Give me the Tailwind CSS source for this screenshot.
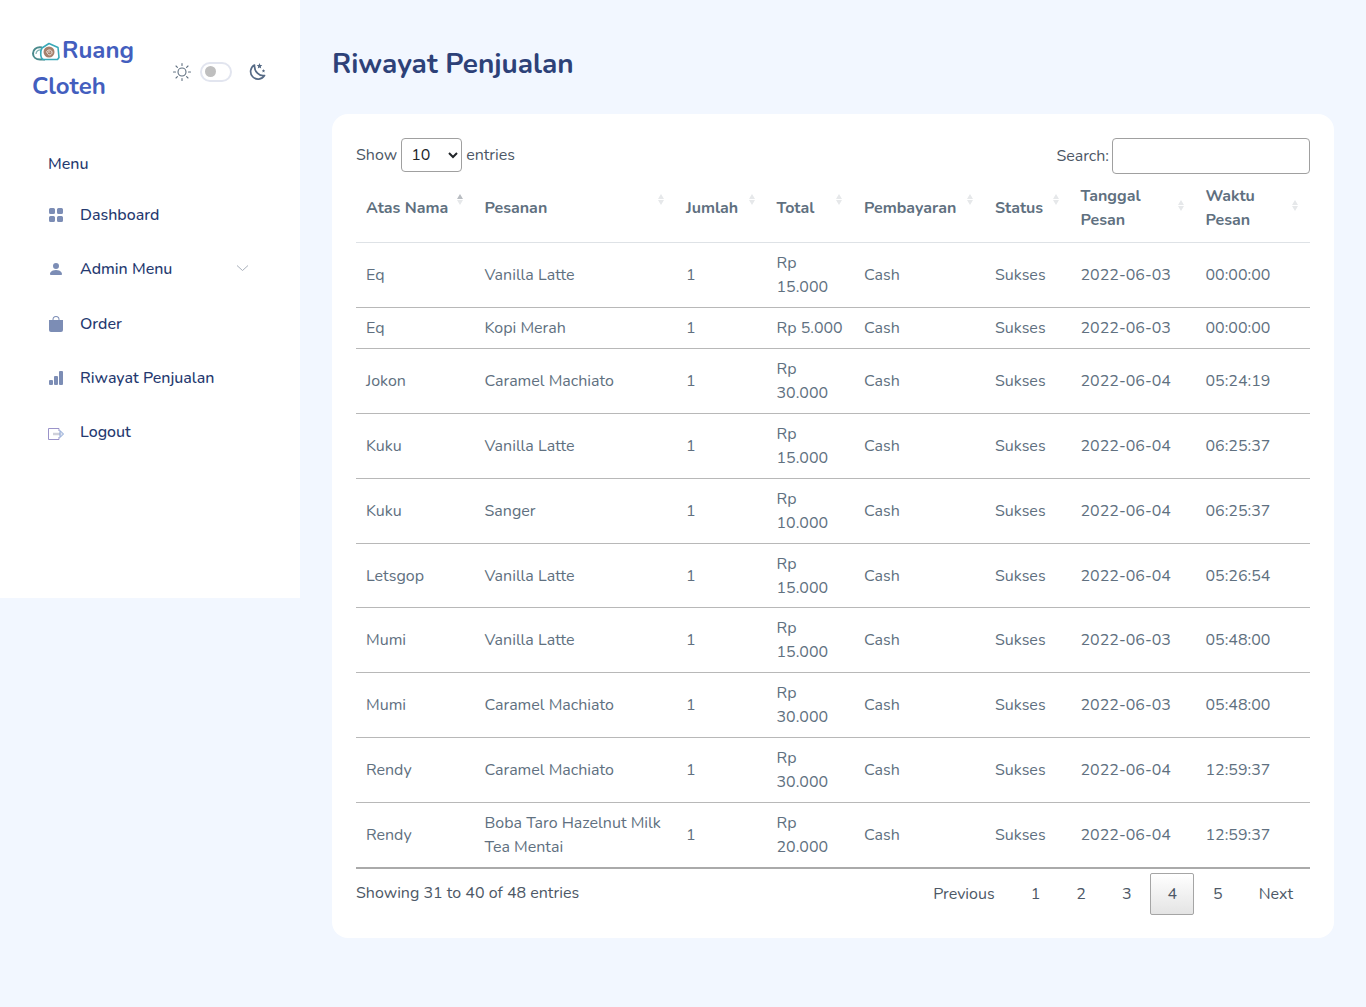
<!DOCTYPE html>
<html lang="id">
<head>
    <meta charset="UTF-8">
    <meta name="viewport" content="width=device-width, initial-scale=1.0">
    <title>Riwayat Penjualan</title>
    <script src="https://cdn.jsdelivr.net/npm/@tailwindcss/browser@4"></script>
</head>
<body class="bg-[#f2f7ff] text-[#607080] font-['Nunito','Lato',sans-serif] text-base leading-6 min-h-[1007px]">
<div class="flex items-start">
    <!-- Sidebar -->
    <aside class="w-[300px] h-[598px] shrink-0 bg-white">
        <div class="flex items-center pt-[32px] pl-[32px]">
            <div class="w-[120px] text-[24px] leading-[36px] font-bold text-[#435ebe]">
                <svg class="inline-block w-[30px] h-[20px] align-[-4px]" viewBox="0 0 30 20" fill="none">
                    <path d="M10 5.500C4 4.500 1 8 1 11.500 1 15 4 17.500 8 17.500h5" stroke="#4a8a8c" stroke-width="2"/>
                    <path d="M4 12c0-3 2.500-4.500 5.500-4" stroke="#7fb0b0" stroke-width="1.200"/>
                    <path d="M10 6L17 1.500 26 5.500l1 10-1.500 2H12C8 17.500 8 9 10 6z" fill="#fff" stroke="#39a9b8" stroke-width="1.600" stroke-linejoin="round"/>
                    <circle cx="17" cy="10" r="5.500" fill="#a5806c"/>
                    <path d="M14.500 10.500c0-3 5-3.500 5.500-.5s-3.500 4-4.500 1.500c-.4-1.500 2-2.500 2.500-1" stroke="#efe6df" stroke-width="1"/>
                </svg>Ruang Cloteh
            </div>
            <div class="flex items-center ml-[20px] mt-[7px]">
                <svg class="w-5 h-5 text-[#607080]" viewBox="0 0 20 20" fill="none" stroke="currentColor" stroke-width="1.100" stroke-linecap="round">
                    <circle cx="10" cy="10" r="4"/>
                    <path d="M10 1.500v2M10 16.500v2M1.500 10h2M16.500 10h2M4 4l1.400 1.400M14.600 14.600L16 16M4 16l1.400-1.400M14.600 5.400L16 4"/>
                </svg>
                <span class="ml-[8px] flex items-center w-[32px] h-[20px] rounded-full border-[2px] border-[#e2e5ef] bg-white pl-[3px]">
                    <span class="w-[11px] h-[11px] rounded-full bg-[#bfbfbf]"></span>
                </span>
                <svg class="ml-[15px] w-5 h-5 text-[#566a85]" viewBox="0 0 20 20" fill="none">
                    <path d="M7.500 3a7.500 7.500 0 1 0 10 10.500c-5 1-10.500-4-10-10.500z" stroke="currentColor" stroke-width="1.700" stroke-linejoin="round"/>
                    <path d="M12.500 1l.8 1.900 2 .2-1.500 1.300.4 2-1.700-1-1.700 1 .4-2-1.500-1.300 2-.2zM16.500 7l.5 1.200 1.200.2-.9.8.2 1.200-1-.6-1 .6.2-1.200-.9-.8 1.200-.2z" fill="currentColor"/>
                </svg>
            </div>
        </div>
        <nav class="mt-[48px] pl-[48px] text-[#25396f] font-medium">
            <div class="leading-[24px]">Menu</div>
            <ul class="mt-[15px] flex flex-col gap-[6.250px]">
                <li class="flex items-center h-[48px]">
                    <svg class="w-4 h-4 fill-[#7c8db5]" viewBox="0 0 16 16"><path d="M1 2.500A1.500 1.500 0 0 1 2.500 1h3A1.500 1.500 0 0 1 7 2.500v3A1.500 1.500 0 0 1 5.500 7h-3A1.500 1.500 0 0 1 1 5.500v-3zm8 0A1.500 1.500 0 0 1 10.500 1h3A1.500 1.500 0 0 1 15 2.500v3A1.500 1.500 0 0 1 13.500 7h-3A1.500 1.500 0 0 1 9 5.500v-3zm-8 8A1.500 1.500 0 0 1 2.500 9h3A1.500 1.500 0 0 1 7 10.500v3A1.500 1.500 0 0 1 5.500 15h-3A1.500 1.500 0 0 1 1 13.500v-3zm8 0A1.500 1.500 0 0 1 10.500 9h3a1.500 1.500 0 0 1 1.500 1.500v3a1.500 1.500 0 0 1-1.500 1.500h-3A1.500 1.500 0 0 1 9 13.500v-3z"/></svg>
                    <span class="ml-[16px]">Dashboard</span>
                </li>
                <li class="flex items-center h-[48px]">
                    <svg class="w-4 h-4 fill-[#7c8db5]" viewBox="0 0 16 16"><path d="M3 14s-1 0-1-1 1-4 6-4 6 3 6 4-1 1-1 1H3zm5-6a3 3 0 1 0 0-6 3 3 0 0 0 0 6z"/></svg>
                    <span class="ml-[16px]">Admin Menu</span>
                    <svg class="ml-[64px] mt-[-3px] w-[13px] h-[8px]" viewBox="0 0 13 8" fill="none" stroke="#a9b0bb" stroke-width="1"><path d="M1 1.500l5.500 5 5.500-5"/></svg>
                </li>
                <li class="flex items-center h-[48px]">
                    <svg class="w-4 h-4 fill-[#7c8db5]" viewBox="0 0 16 16"><path d="M8 1a2.500 2.500 0 0 1 2.500 2.500V4h-5v-.5A2.500 2.500 0 0 1 8 1zm3.500 3v-.5a3.500 3.500 0 1 0-7 0V4H1v10a2 2 0 0 0 2 2h10a2 2 0 0 0 2-2V4h-3.500z"/></svg>
                    <span class="ml-[16px]">Order</span>
                </li>
                <li class="flex items-center h-[48px]">
                    <svg class="w-4 h-4 fill-[#7c8db5]" viewBox="0 0 16 16"><path d="M1 11a1 1 0 0 1 1-1h2a1 1 0 0 1 1 1v3a1 1 0 0 1-1 1H2a1 1 0 0 1-1-1v-3zm5-4a1 1 0 0 1 1-1h2a1 1 0 0 1 1 1v7a1 1 0 0 1-1 1H7a1 1 0 0 1-1-1V7zm5-5a1 1 0 0 1 1-1h2a1 1 0 0 1 1 1v12a1 1 0 0 1-1 1h-2a1 1 0 0 1-1-1V2z"/></svg>
                    <span class="ml-[16px]">Riwayat Penjualan</span>
                </li>
                <li class="flex items-center h-[48px]">
                    <svg class="w-4 h-4 mt-[3px]" viewBox="0 0 16 16" fill="none">
                        <path d="M5 8h7" stroke="#cfd0da" stroke-width="2.500"/>
                        <path d="M11 5V2.500H.5v11H11V11" stroke="#9a93c9" stroke-width="1"/>
                        <path d="M12 4.500L15.500 8 12 11.500z" stroke="#8aa5d6" stroke-width="1" fill="#dfe3ee"/>
                    </svg>
                    <span class="ml-[16px]">Logout</span>
                </li>
            </ul>
        </nav>
    </aside>

    <!-- Konten -->
    <main class="flex-1 px-[32px]">
        <h1 class="mt-[45px] text-[28px] leading-[38px] font-bold text-[#2d4178]">Riwayat Penjualan</h1>
        <div class="mt-[31px] bg-white rounded-[16px] p-[24px] h-[824px]">
            <div class="flex justify-between text-[#4d5866]">
                <label class="flex items-center h-[34px]">Show
                    <select class="mx-[4px] w-[61px] h-[34px] pl-[5px] border border-[#a0a0a0] rounded-[4px] text-[#212529] bg-white">
                        <option>10</option>
                    </select>
                    entries
                </label>
                <label class="flex items-center h-[36px]">Search:
                    <input type="text" class="ml-[3px] w-[198px] h-[36px] border border-[#a0a0a0] rounded-[4px]">
                </label>
            </div>
            <table class="mt-[2px] w-[954px] table-fixed border-collapse text-left [&_td]:px-[10px] [&_td]:py-[8px] [&_th]:px-[10px] [&_th]:pt-[8px] [&_th]:pb-[10px] [&_th]:relative [&_th]:font-bold">
                <thead>
                    <tr class="border-b border-[#dee2e6]">
                        <th class="w-[118.500px]">Atas Nama
                            <svg class="absolute right-[12px] top-[18px] w-[6px] h-[11px]" viewBox="0 0 6 11"><path d="M3 0l3 5H0z" fill="#b9bdc2"/><path d="M0 6h6l-3 5z" fill="#e6e8ea"/></svg>
                        </th>
                        <th class="w-[201.500px]">Pesanan
                            <svg class="absolute right-[12px] top-[18px] w-[6px] h-[11px]" viewBox="0 0 6 11"><path d="M3 0l3 5H0z" fill="#e6e8ea"/><path d="M0 6h6l-3 5z" fill="#e6e8ea"/></svg>
                        </th>
                        <th class="w-[90.500px]">Jumlah
                            <svg class="absolute right-[12px] top-[18px] w-[6px] h-[11px]" viewBox="0 0 6 11"><path d="M3 0l3 5H0z" fill="#e6e8ea"/><path d="M0 6h6l-3 5z" fill="#e6e8ea"/></svg>
                        </th>
                        <th class="w-[87.500px]">Total
                            <svg class="absolute right-[12px] top-[18px] w-[6px] h-[11px]" viewBox="0 0 6 11"><path d="M3 0l3 5H0z" fill="#e6e8ea"/><path d="M0 6h6l-3 5z" fill="#e6e8ea"/></svg>
                        </th>
                        <th class="w-[131px]">Pembayaran
                            <svg class="absolute right-[12px] top-[18px] w-[6px] h-[11px]" viewBox="0 0 6 11"><path d="M3 0l3 5H0z" fill="#e6e8ea"/><path d="M0 6h6l-3 5z" fill="#e6e8ea"/></svg>
                        </th>
                        <th class="w-[85.500px]">Status
                            <svg class="absolute right-[12px] top-[18px] w-[6px] h-[11px]" viewBox="0 0 6 11"><path d="M3 0l3 5H0z" fill="#e6e8ea"/><path d="M0 6h6l-3 5z" fill="#e6e8ea"/></svg>
                        </th>
                        <th class="w-[125px]">Tanggal<br>Pesan
                            <svg class="absolute right-[12px] top-[24px] w-[6px] h-[11px]" viewBox="0 0 6 11"><path d="M3 0l3 5H0z" fill="#e6e8ea"/><path d="M0 6h6l-3 5z" fill="#e6e8ea"/></svg>
                        </th>
                        <th class="w-[114.500px]">Waktu<br>Pesan
                            <svg class="absolute right-[12px] top-[24px] w-[6px] h-[11px]" viewBox="0 0 6 11"><path d="M3 0l3 5H0z" fill="#e6e8ea"/><path d="M0 6h6l-3 5z" fill="#e6e8ea"/></svg>
                        </th>
                    </tr>
                </thead>
                <tbody class="[&_tr]:border-b [&_tr]:border-[#b8b8b8]">
                    <tr><td>Eq</td><td>Vanilla Latte</td><td>1</td><td>Rp<br>15.000</td><td>Cash</td><td>Sukses</td><td>2022-06-03</td><td>00:00:00</td></tr>
                    <tr><td>Eq</td><td>Kopi Merah</td><td>1</td><td class="whitespace-nowrap">Rp 5.000</td><td>Cash</td><td>Sukses</td><td>2022-06-03</td><td>00:00:00</td></tr>
                    <tr><td>Jokon</td><td>Caramel Machiato</td><td>1</td><td>Rp<br>30.000</td><td>Cash</td><td>Sukses</td><td>2022-06-04</td><td>05:24:19</td></tr>
                    <tr><td>Kuku</td><td>Vanilla Latte</td><td>1</td><td>Rp<br>15.000</td><td>Cash</td><td>Sukses</td><td>2022-06-04</td><td>06:25:37</td></tr>
                    <tr><td>Kuku</td><td>Sanger</td><td>1</td><td>Rp<br>10.000</td><td>Cash</td><td>Sukses</td><td>2022-06-04</td><td>06:25:37</td></tr>
                    <tr class="[&>td]:!py-[7.500px]"><td>Letsgop</td><td>Vanilla Latte</td><td>1</td><td>Rp<br>15.000</td><td>Cash</td><td>Sukses</td><td>2022-06-04</td><td>05:26:54</td></tr>
                    <tr><td>Mumi</td><td>Vanilla Latte</td><td>1</td><td>Rp<br>15.000</td><td>Cash</td><td>Sukses</td><td>2022-06-03</td><td>05:48:00</td></tr>
                    <tr><td>Mumi</td><td>Caramel Machiato</td><td>1</td><td>Rp<br>30.000</td><td>Cash</td><td>Sukses</td><td>2022-06-03</td><td>05:48:00</td></tr>
                    <tr><td>Rendy</td><td>Caramel Machiato</td><td>1</td><td>Rp<br>30.000</td><td>Cash</td><td>Sukses</td><td>2022-06-04</td><td>12:59:37</td></tr>
                    <tr class="!border-[#aaaaaa]"><td>Rendy</td><td>Boba Taro Hazelnut Milk<br>Tea Mentai</td><td>1</td><td>Rp<br>20.000</td><td>Cash</td><td>Sukses</td><td>2022-06-04</td><td>12:59:37</td></tr>
                </tbody>
            </table>
            <div class="h-[1px] bg-[#aaaaaa]"></div>
            <div class="flex justify-between items-start mt-[4px] text-[#4d5866]">
                <div class="mt-[8px]">Showing 31 to 40 of 48 entries</div>
                <div class="flex [&>span]:ml-[2px] [&>span]:px-[16px] [&>span]:py-[8px] [&>span]:border [&>span]:border-transparent [&>span]:rounded-[2px]">
                    <span>Previous</span>
                    <span>1</span>
                    <span>2</span>
                    <span>3</span>
                    <span class="!border-[#a5a5a5] bg-gradient-to-b from-white to-[#e4e4e4]">4</span>
                    <span>5</span>
                    <span>Next</span>
                </div>
            </div>
        </div>
    </main>
</div>
</body>
</html>
